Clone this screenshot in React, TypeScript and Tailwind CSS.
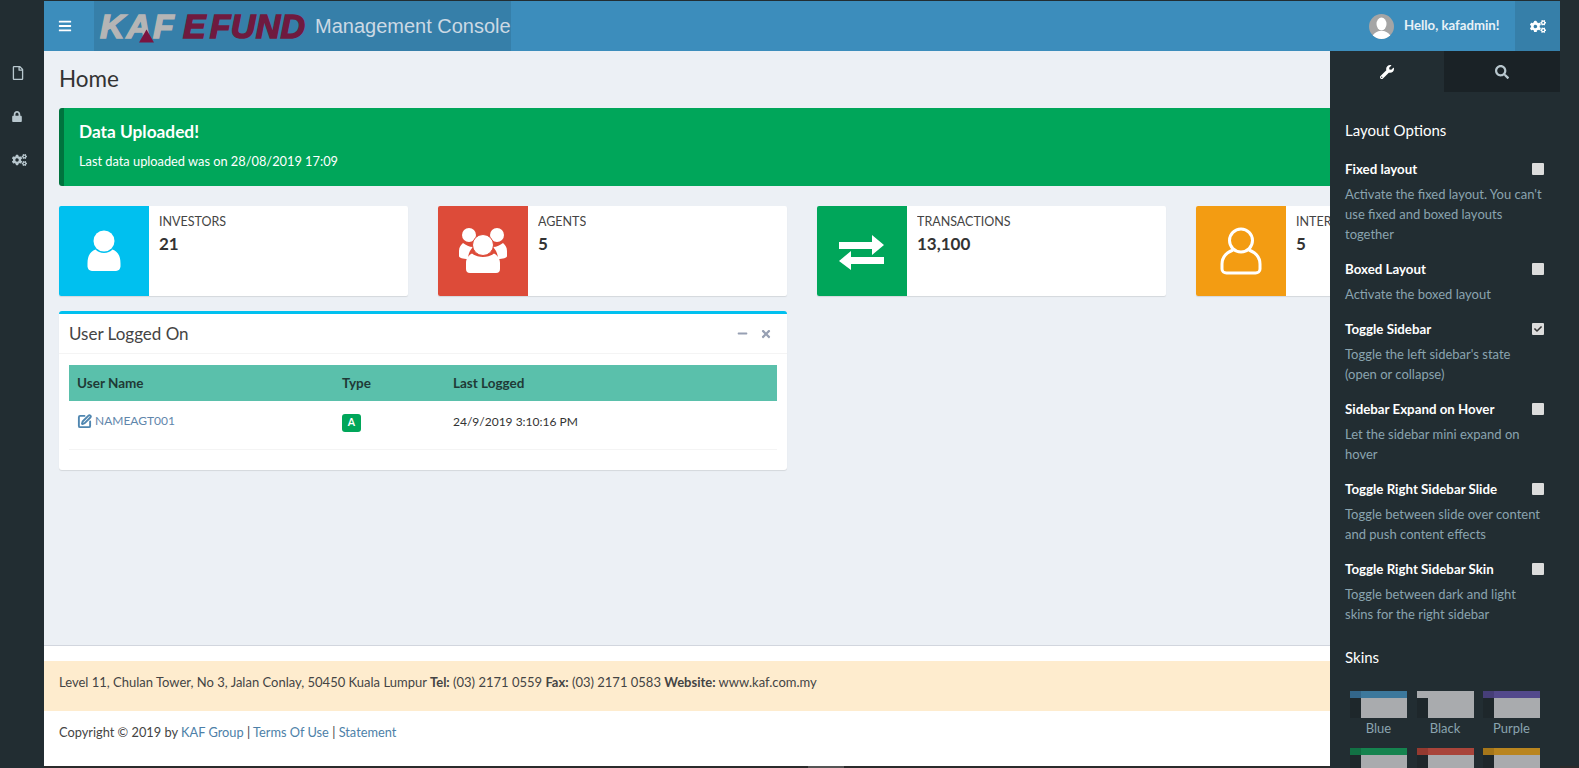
import { SquarePen } from 'lucide-react'
import { FaBars, FaCheck, FaCogs, FaLock, FaMinus, FaRegFile, FaSearch, FaTimes, FaWrench } from 'react-icons/fa'

const font = { fontFamily: 'Lato, "Noto Sans", sans-serif' }
const logoFont = { fontFamily: '"Liberation Sans", sans-serif' }

function PersonIcon() {
  return (
    <svg viewBox="0 0 90 90" className="h-[90px] w-[90px] fill-white">
      <circle cx="45" cy="35" r="10.500" />
      <path d="M33 65a5 5 0 0 1-4.500-4.500v-3c0-8 3-12 8-14 2 2 5 3.500 8.500 3.500s6.500-1.500 8.500-3.500c5 2 8 6 8 14v3a5 5 0 0 1-4.500 4.500z" />
    </svg>
  )
}

function PeopleIcon() {
  return (
    <svg viewBox="0 0 90 90" className="h-[90px] w-[90px] fill-white">
      <circle cx="31" cy="29" r="7" />
      <circle cx="59" cy="29" r="7" />
      <path d="M25 37c-2 2-4 4-4 8v5c0 2 4 3 9 3 0-5 2-9 5-12-4 0-7-2-10-4zM65 37c2 2 4 4 4 8v5c0 2-4 3-9 3 0-5-2-9-5-12 4 0 7-2 10-4z" />
      <circle cx="45" cy="39" r="10.500" stroke="#dd4b39" strokeWidth="1" />
      <path d="M32 67a4 4 0 0 1-4-4v-6c0-5 3-8 6-9.500 3 2.500 7 3.500 11 3.500s8-1 11-3.500c3 1.500 6 4.500 6 9.500v6a4 4 0 0 1-4 4z" />
    </svg>
  )
}

function ExchangeIcon() {
  return (
    <svg viewBox="0 0 90 90" className="h-[90px] w-[90px] fill-white">
      <path d="M22 36h33v-7l12 10-12 10v-6H22zM67 51v7H34v6L22 55l12-10v6z" />
    </svg>
  )
}

function PersonOutlineIcon() {
  return (
    <svg viewBox="0 0 90 90" className="h-[90px] w-[90px] fill-none stroke-white" strokeWidth="3">
      <circle cx="45" cy="34.500" r="11.500" />
      <path d="M37 44c-5 2-11 6-11 14v5c0 2.500 2 4 4.500 4h29c2.500 0 4.500-1.500 4.500-4v-5c0-8-6-12-11-14" />
    </svg>
  )
}

const stats = [
  { label: 'Investors', value: '21', tone: 'bg-[#00c0ef]', icon: <PersonIcon /> },
  { label: 'Agents', value: '5', tone: 'bg-[#dd4b39]', icon: <PeopleIcon /> },
  { label: 'Transactions', value: '13,100', tone: 'bg-[#00a65a]', icon: <ExchangeIcon /> },
  { label: 'Intermediaries', value: '5', tone: 'bg-[#f39c12]', icon: <PersonOutlineIcon /> },
]

const options = [
  { label: 'Fixed layout', text: "Activate the fixed layout. You can't use fixed and boxed layouts together" },
  { label: 'Boxed Layout', text: 'Activate the boxed layout' },
  { label: 'Toggle Sidebar', text: "Toggle the left sidebar's state (open or collapse)", checked: true },
  { label: 'Sidebar Expand on Hover', text: 'Let the sidebar mini expand on hover' },
  { label: 'Toggle Right Sidebar Slide', text: 'Toggle between slide over content and push content effects' },
  { label: 'Toggle Right Sidebar Skin', text: 'Toggle between dark and light skins for the right sidebar' },
]

const skins = [
  { name: 'Blue', top: 'bg-[#3c789c]', corner: 'bg-[#33668a]' },
  { name: 'Black', top: 'bg-[#a9abae]', corner: 'bg-[#a9abae]' },
  { name: 'Purple', top: 'bg-[#53498c]', corner: 'bg-[#463e78]' },
  { name: 'Green', top: 'bg-[#15834f]', corner: 'bg-[#127044]' },
  { name: 'Red', top: 'bg-[#a8443a]', corner: 'bg-[#943a30]' },
  { name: 'Yellow', top: 'bg-[#b9851f]', corner: 'bg-[#a5761a]' },
]

export default function App() {
  return (
    <div style={font} className="relative flex h-screen w-full overflow-hidden bg-[#222d32] pt-px pb-[2px] text-[13px] text-[#333]">
      <nav className="flex w-[44px] shrink-0 flex-col items-start gap-[31px] pt-[65px] pl-[12px] text-[#b8c7ce]">
        <FaRegFile className="h-[14px] w-[12px]" />
        <FaLock className="h-[11px] w-[10px]" />
        <FaCogs className="h-[14px] w-[15px]" />
      </nav>

      <div className="relative flex min-w-0 flex-1 flex-col bg-[#ecf0f5]">
        <header className="flex h-[50px] shrink-0 items-center bg-[#3c8dbc] text-white">
          <div className="flex w-[50px] justify-center pr-[8px]">
            <FaBars className="h-[14px] w-[14px]" />
          </div>
          <div className="flex h-full w-[417px] items-center bg-[#367fa9] pl-[6px] whitespace-nowrap">
            <span style={logoFont} className="relative w-[83px] text-[34px] leading-none font-bold tracking-[2px] text-[#b5b5b5] italic [-webkit-text-stroke:1.5px_#b5b5b5]">
              KAF
              <svg viewBox="0 0 16 14" className="absolute top-[20px] left-[39px] h-[14px] w-[15px] fill-[#7a1440]">
                <path d="M8 0l8 14H0z" />
              </svg>
            </span>
            <span style={logoFont} className="w-[122px] text-[34px] leading-none font-bold tracking-[0.300px] text-[#6f1a3f] italic [word-spacing:-6px] [-webkit-text-stroke:1.5px_#6f1a3f]">
              E FUND
            </span>
            <span style={logoFont} className="ml-[10px] text-[20px] text-[#cbd9e4]">
              Management Console
            </span>
          </div>
          <div className="ml-auto flex h-full items-center">
            <div className="flex h-[25px] w-[25px] items-end justify-center overflow-hidden rounded-full bg-[#a5a5a5]">
              <svg viewBox="0 0 25 25" className="h-[25px] w-[25px] fill-white">
                <ellipse cx="12.500" cy="10" rx="5" ry="6.500" />
                <path d="M3 25c0-5 4-7 7-8h5c3 1 7 3 7 8z" />
              </svg>
            </div>
            <span className="ml-[10px] w-[111px] text-[13.200px] font-bold text-[#e8f1f7]">Hello, kafadmin!</span>
            <div className="flex h-full w-[45px] items-center justify-center bg-[#367fa9]">
              <FaCogs className="h-[15px] w-[16px]" />
            </div>
          </div>
        </header>

        <main className="min-h-0 flex-1 px-[15px]">
          <h1 className="pt-[14px] text-[22.500px] leading-[28px] text-[#333]">Home</h1>

          <div className="mt-[15px] h-[78px] rounded-[3px] border-l-[5px] border-[#00733e] bg-[#00a65a] pt-[12px] pl-[15px] text-white">
            <h4 className="text-[17.300px] leading-[24px] font-bold">Data Uploaded!</h4>
            <p className="mt-[7px] text-[12.800px] leading-[20px]">Last data uploaded was on 28/08/2019 17:09</p>
          </div>

          <div className="mt-[20px] grid grid-cols-4 gap-[30px]">
            {stats.map((stat) => (
              <div key={stat.label} className="flex h-[90px] rounded-[2px] bg-white shadow-[0_1px_1px_rgba(0,0,0,0.1)]">
                <div className={`h-[90px] w-[90px] shrink-0 rounded-l-[2px] ${stat.tone}`}>{stat.icon}</div>
                <div className="min-w-0 px-[10px] py-[6px]">
                  <div className="truncate text-[12.500px] leading-[20px] text-[#444] uppercase">{stat.label}</div>
                  <div className="text-[17px] leading-[24px] font-bold">{stat.value}</div>
                </div>
              </div>
            ))}
          </div>

          <div className="mt-[15px] h-[159px] w-[728px] rounded-[3px] border-t-[3px] border-[#00c0ef] bg-white shadow-[0_1px_1px_rgba(0,0,0,0.1)]">
            <div className="flex h-[40px] items-center justify-between border-b border-[#f4f4f4] px-[10px]">
              <h3 className="text-[17px] text-[#444]">User Logged On</h3>
              <div className="flex items-center gap-[12px] pr-[5px] text-[#97a0b3]">
                <FaMinus className="h-[11px] w-[11px]" />
                <FaTimes className="h-[12px] w-[12px]" />
              </div>
            </div>
            <div className="px-[10px] pt-[11px]">
              <table className="w-full table-fixed border-b border-[#f4f4f4] text-left">
                <thead>
                  <tr className="h-[36px] bg-[#5ac0ab] text-[13.500px] text-[#1f3a36]">
                    <th className="w-[273px] pt-px pl-[8px] font-bold">User Name</th>
                    <th className="w-[111px] pt-px pl-0 font-bold">Type</th>
                    <th className="pt-px pl-0 font-bold">Last Logged</th>
                  </tr>
                </thead>
                <tbody>
                  <tr className="h-[48px] align-top text-[12px]">
                    <td className="pt-[11px] pl-[8px] text-[#5f86ab]">
                      <span className="flex items-center gap-[3px]">
                        <SquarePen size={15} strokeWidth={3} className="text-[#4f86b0]" />
                        NAMEAGT001
                      </span>
                    </td>
                    <td className="pt-[13px]">
                      <span className="flex h-[18px] w-[19px] items-center justify-center rounded-[3px] bg-[#00a65a] text-[10.500px] font-bold text-white">A</span>
                    </td>
                    <td className="pt-[12px]">24/9/2019 3:10:16 PM</td>
                  </tr>
                </tbody>
              </table>
            </div>
          </div>
        </main>

        <footer className="flex h-[121px] shrink-0 flex-col border-t border-[#d2d6de] bg-white">
          <div className="mt-[15px] flex h-[50px] items-center bg-[#feecce] px-[15px] pb-[6px] text-[#444]">
            <p>
              Level 11, Chulan Tower, No 3, Jalan Conlay, 50450 Kuala Lumpur <b>Tel:</b> (03) 2171 0559 <b>Fax:</b> (03) 2171 0583 <b>Website:</b> www.kaf.com.my
            </p>
          </div>
          <div className="flex h-[44px] items-center px-[15px] text-[12.800px] text-[#444]">
            <p>
              Copyright © 2019 by <span className="text-[#4d7fa8]">KAF Group</span> | <span className="text-[#4d7fa8]">Terms Of Use</span> | <span className="text-[#4d7fa8]">Statement</span>
            </p>
          </div>
        </footer>

        <aside className="absolute top-[50px] right-0 bottom-[-2px] z-10 w-[230px] overflow-hidden bg-[#222d32] text-[#8aa4af]">
          <div className="flex h-[41px]">
            <div className="flex w-[114px] items-center justify-center text-white">
              <FaWrench className="h-[14px] w-[14px]" />
            </div>
            <div className="flex flex-1 items-center justify-center bg-[#1a2226] text-[#b8c7ce]">
              <FaSearch className="h-[14px] w-[14px]" />
            </div>
          </div>
          <div className="px-[15px] pt-[26px]">
            <h3 className="text-[15px] leading-[24px] text-white">Layout Options</h3>
            <div className="mt-[17px] flex flex-col gap-[15px]">
              {options.map((option) => (
                <div key={option.label}>
                  <div className="flex h-[22px] items-center justify-between text-[13.300px] font-bold text-white">
                    {option.label}
                    <span className="mr-px -mt-[2px] flex h-[12px] w-[12px] items-center justify-center rounded-[1px] bg-[#dcdcdc] text-[#333]">
                      {option.checked && <FaCheck className="h-[8px] w-[8px]" />}
                    </span>
                  </div>
                  <p className="mt-[3px] text-[13px] leading-[20px]">{option.text}</p>
                </div>
              ))}
            </div>
            <h4 className="mt-[21px] text-[15px] leading-[24px] text-white">Skins</h4>
            <div className="mt-[22px] grid grid-cols-[repeat(3,57px)] gap-x-[9.500px] gap-y-[10px] pl-[5px]">
              {skins.map((skin) => (
                <div key={skin.name} className="w-[57px] text-center">
                  <div className="h-[27px] w-[57px]">
                    <div className={`flex h-[7px] ${skin.top}`}>
                      <div className={`h-full w-[11px] ${skin.corner}`} />
                    </div>
                    <div className="flex h-[20px]">
                      <div className="h-full w-[11px] bg-[#1e272b]" />
                      <div className="h-full flex-1 bg-[#a9abae]" />
                    </div>
                  </div>
                  <div className="text-[13px] leading-[20px]">{skin.name}</div>
                </div>
              ))}
            </div>
          </div>
        </aside>
      </div>

      <div className="w-[19px] shrink-0" />

      <div className="absolute right-0 bottom-0 left-[44px] h-[2px] bg-[#2b2b2b]">
        <div className="ml-[764px] h-full w-[36px] bg-[#555]" />
      </div>
    </div>
  )
}
